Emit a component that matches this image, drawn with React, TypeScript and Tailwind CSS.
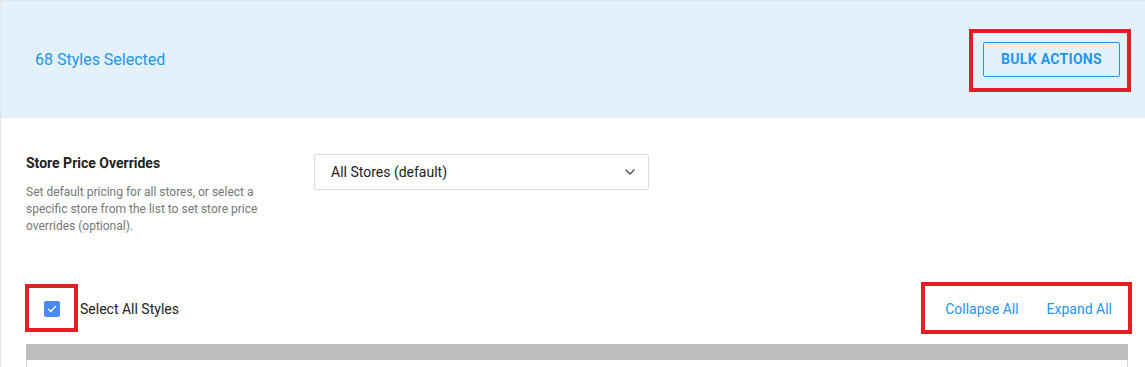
import React from "react";

function RedBox({ className }: { className: string }) {
  return <span className={`pointer-events-none absolute border-4 border-[#e31e24] ${className}`} />;
}

export default function App() {
  return (
    <div className="w-[1145px] h-[367px] overflow-hidden bg-white font-['Roboto',sans-serif] border-l border-t border-[#e4e4e4]">
      <div className="h-[117px] bg-[#e3f1fc] flex items-center justify-between pl-[34px] pr-[25px]">
        <div className="text-[16px] text-[#2196f3]">68 Styles Selected</div>
        <div className="relative mt-[-1px]">
          <button className="h-[35px] w-[137px] border border-[#2196f3] rounded-[2px] text-[14px] font-bold text-[#2196f3] tracking-[0.3px]">
            BULK ACTIONS
          </button>
          <RedBox className="-left-[14px] -right-[11px] -top-[13px] -bottom-[15px]" />
        </div>
      </div>
      <div className="pl-[25px] pr-[17px]">
        <div className="flex items-start pt-[35px]">
          <div className="w-[288px]">
            <div className="text-[14px] leading-[20px] font-bold text-[#222]">Store Price Overrides</div>
            <div className="mt-[11px] w-[240px] text-[12px] leading-[17px] text-[#777]">
              Set default pricing for all stores, or select a specific store from the list to set store price overrides (optional).
            </div>
          </div>
          <div className="mt-[1px] w-[335px] h-[36px] border border-[#dcdcdc] rounded-[2px] flex items-center justify-between pl-[16px] pr-[12px]">
            <span className="text-[14px] text-[#222]">All Stores (default)</span>
            <svg width="12" height="12" viewBox="0 0 12 12" fill="none">
              <path d="M2 4l4 4 4-4" stroke="#555" strokeWidth="1.5" strokeLinecap="round" strokeLinejoin="round" />
            </svg>
          </div>
        </div>
        <div className="mt-[54px] h-[40px] flex items-center justify-between">
          <div className="flex items-center pl-[18px]">
            <div className="relative">
              <div className="w-[16px] h-[16px] rounded-[2px] bg-[#4a8af4] flex items-center justify-center">
                <svg width="12" height="12" viewBox="0 0 12 12" fill="none">
                  <path d="M2.5 6.2l2.3 2.2 4.7-4.8" stroke="white" strokeWidth="1.4" strokeLinecap="round" strokeLinejoin="round" />
                </svg>
              </div>
              <RedBox className="-left-[19px] -right-[18px] -top-[17px] -bottom-[15px]" />
            </div>
            <span className="ml-[20px] text-[14px] text-[#222]">Select All Styles</span>
          </div>
          <div className="relative flex items-center gap-[28px] pr-[16px] text-[14px] text-[#2196f3]">
            <span>Collapse All</span>
            <span>Expand All</span>
            <RedBox className="-left-[24px] -right-[4px] -top-[17px] -bottom-[14px]" />
          </div>
        </div>
        <div className="mt-[15px] h-[16px] bg-[#bdbdbd]" />
        <div className="h-[30px] border-l border-r border-[#d8d8d8]" />
      </div>
    </div>
  );
}
